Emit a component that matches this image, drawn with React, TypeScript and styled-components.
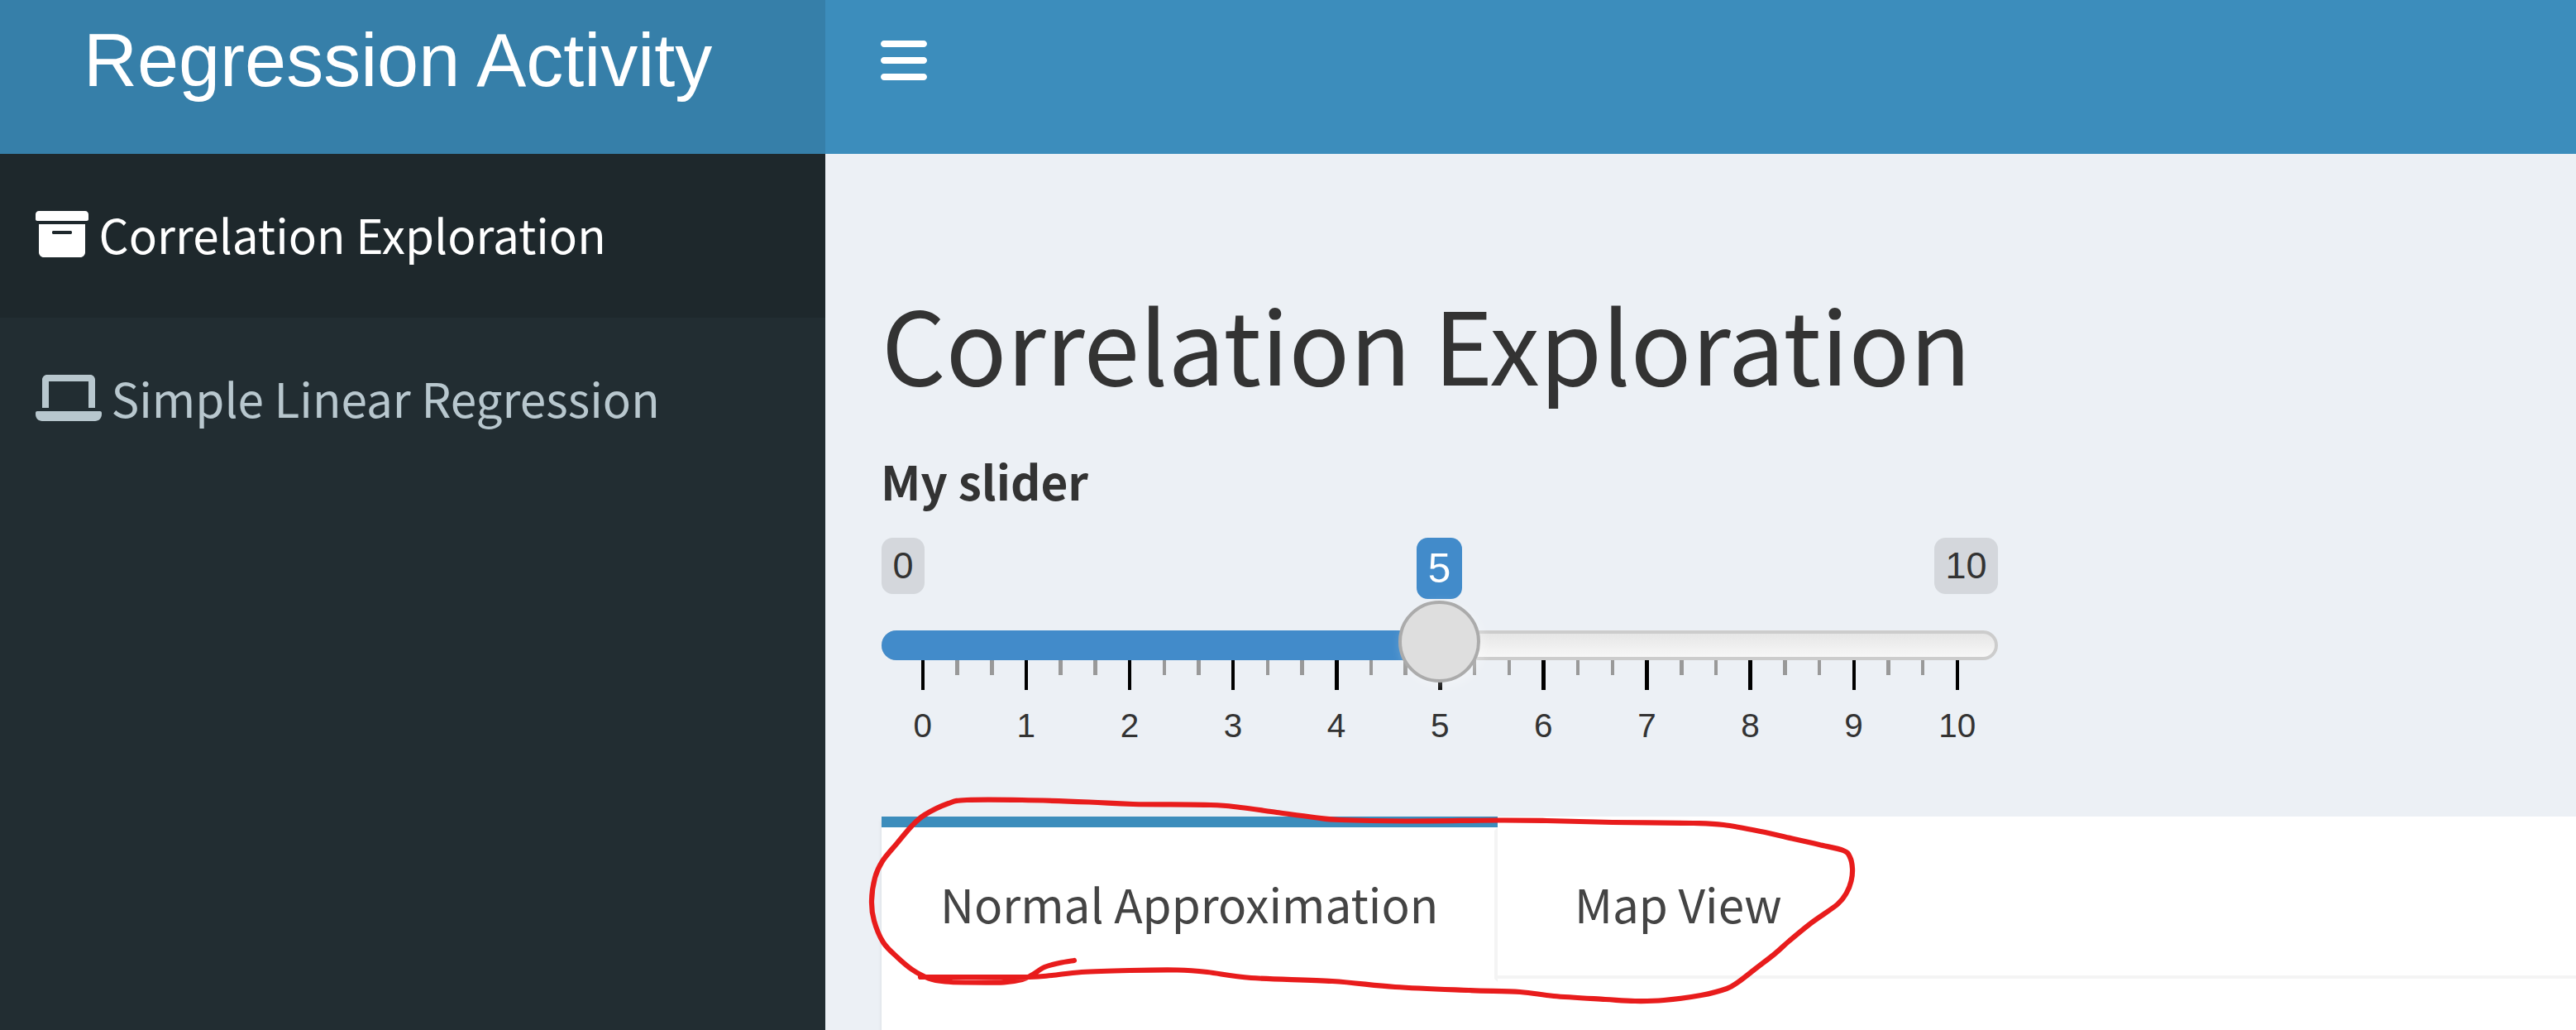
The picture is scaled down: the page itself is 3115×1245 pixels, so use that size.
import React from "react";
import styled, { createGlobalStyle, css } from "styled-components";

const GlobalStyle = createGlobalStyle`
  *, *::before, *::after { box-sizing: border-box; }
  html, body { margin: 0; padding: 0; overflow: hidden; background: #ecf0f5; }
`;

const SANS = `"Noto Sans CJK SC", "Noto Sans", sans-serif`;
const ARIAL = `"Liberation Sans", Arial, sans-serif`;

const Page = styled.div`
  position: relative;
  width: 3115px;
  height: 1245px;
  overflow: hidden;
  display: grid;
  grid-template-columns: 998px 1fr;
  grid-template-rows: 186px 1fr;
  font-family: ${SANS};
  color: #333;
  background: #ecf0f5;
`;

const Logo = styled.div`
  background: #367fa9;
  color: #fff;
  font-family: ${ARIAL};
  font-size: 90px;
  line-height: 100px;
  padding: 23px 0 0 101px;
  white-space: nowrap;
`;

const Navbar = styled.div`
  background: #3c8dbc;
  color: #fff;
  padding: 41px 0 0 67px;
`;

const Icon = styled.svg<{ $w: number; $h: number }>`
  display: block;
  flex: none;
  width: ${(p) => p.$w}px;
  height: ${(p) => p.$h}px;
  fill: currentColor;
`;

const Sidebar = styled.nav`
  background: #222d32;
`;

const MenuItem = styled.a<{ $active?: boolean }>`
  display: flex;
  align-items: flex-start;
  height: 198px;
  padding: 65px 0 0 43px;
  color: ${(p) => (p.$active ? "#fff" : "#b8c7ce")};
  background: ${(p) => (p.$active ? "#1e282c" : "transparent")};
`;

const MenuText = styled.span<{ $gap: number }>`
  margin: -9px 0 0 ${(p) => p.$gap}px;
  font-size: 56.65px;
  line-height: 80px;
  white-space: nowrap;
`;

const Content = styled.main`
  display: flex;
  flex-direction: column;
  padding: 152px 0 0 68px;
  min-width: 0;
`;

const Title = styled.h2`
  margin: 0;
  font-weight: 400;
  font-size: 121.7px;
  line-height: 150px;
  height: 194px;
  white-space: nowrap;
`;

const SliderLabel = styled.label`
  font-weight: 700;
  font-size: 56.7px;
  line-height: 80px;
  height: 118px;
  padding-top: 8px;
  margin-left: -1px;
  white-space: nowrap;
`;

const Slider = styled.div`
  width: 1350px;
  height: 337px;
  font-family: ${ARIAL};
`;

const Values = styled.div`
  display: flex;
  justify-content: space-between;
  align-items: flex-start;
  height: 112px;
`;

const Value = styled.span<{ $current?: boolean }>`
  border-radius: 13.5px;
  text-align: center;
  white-space: nowrap;
  ${(p) =>
    p.$current
      ? css`
          padding: 0 13.5px;
          height: 74px;
          margin-left: 24px;
          font-size: 49.5px;
          line-height: 74px;
          color: #fff;
          background: #428bca;
        `
      : css`
          padding: 0 13.5px;
          height: 68px;
          font-size: 45px;
          line-height: 67px;
          color: #333;
          background: rgba(0, 0, 0, 0.1);
        `}
`;

const Track = styled.div`
  position: relative;
  height: 36px;
  border: 4px solid #ccc;
  border-radius: 18px;
  background: linear-gradient(to bottom, #dedede -50%, #fff 150%);
`;

const Bar = styled.div`
  position: absolute;
  left: -4px;
  top: -4px;
  width: 675px;
  height: 36px;
  border-radius: 18px 0 0 18px;
  background: #428bca;
`;

const Handle = styled.div`
  position: absolute;
  left: 621px;
  top: -40px;
  z-index: 2;
  width: 99px;
  height: 99px;
  border: 4px solid #ababab;
  border-radius: 50%;
  background: #dedede;
  box-shadow: 4.5px 4.5px 13.5px rgba(255, 255, 255, 0.3);
`;

const Ticks = styled.div`
  display: flex;
  justify-content: space-between;
  height: 36px;
  margin: 0 46.5px 0 47.6px;
`;

const Tick = styled.i<{ $major: boolean }>`
  width: 4.5px;
  height: ${(p) => (p.$major ? 36 : 18)}px;
  background: ${(p) => (p.$major ? "#000" : "#999")};
`;

const TickLabels = styled.div`
  display: grid;
  grid-template-columns: repeat(11, 125.1px);
  margin: 20px 0 0 -12.8px;
  font-size: 40.5px;
  line-height: 46px;
  text-align: center;
`;

const TabPanel = styled.section`
  flex: 1;
  margin-right: -20px;
  background: #fff;
  box-shadow: 0 4.5px 4.5px rgba(0, 0, 0, 0.1);
`;

const TabRow = styled.div`
  display: flex;
  height: 200px;
`;

const Tab = styled.div<{ $active?: boolean }>`
  width: ${(p) => (p.$active ? 745 : 426)}px;
  height: 200px;
  border-top: 13px solid ${(p) => (p.$active ? "#3c8dbc" : "transparent")};
`;

const TabLink = styled.a<{ $active?: boolean }>`
  display: block;
  height: 187px;
  border: solid transparent;
  border-width: 4px 4px 4px 0;
  border-right-color: ${(p) => (p.$active ? "#f4f4f4" : "transparent")};
  padding: 47px 0 0 ${(p) => (p.$active ? 71 : 93)}px;
  color: #444;
  font-size: 56.6px;
  line-height: 80px;
  white-space: nowrap;
`;

const TabRule = styled.div`
  flex: 1;
  display: flex;
  height: 196px;
  border-bottom: 4px solid #f4f4f4;
`;

const Ink = styled.svg`
  position: absolute;
  left: 0;
  top: 0;
  width: 3115px;
  height: 1245px;
  pointer-events: none;
  fill: none;
  stroke: #e81c1c;
  stroke-width: 6.2;
  stroke-linecap: round;
  stroke-linejoin: round;
`;

const ARCHIVE =
  "M32 432C32 458.5 53.49 480 80 480h352c26.51 0 48-21.49 48-48V160H32V432zM160 236C160 229.4 165.4 224 172 224h168C346.6 224 352 229.4 352 236v8C352 250.6 346.6 256 340 256h-168C165.4 256 160 250.6 160 244V236zM480 32H32C14.31 32 0 46.31 0 64v48C0 120.8 7.188 128 16 128h480C504.8 128 512 120.8 512 112V64C512 46.31 497.7 32 480 32z";
const LAPTOP =
  "M128 96h384v256h64V80C576 53.63 554.4 32 528 32h-416C85.63 32 64 53.63 64 80V352h64V96zM624 384h-608C7.25 384 0 391.3 0 400V416c0 35.25 28.75 64 64 64h512c35.25 0 64-28.75 64-64v-16C640 391.3 632.8 384 624 384z";
const BARS =
  "M0 96C0 78.33 14.33 64 32 64H416C433.7 64 448 78.33 448 96C448 113.7 433.7 128 416 128H32C14.33 128 0 113.7 0 96zM0 256C0 238.3 14.33 224 32 224H416C433.7 224 448 238.3 448 256C448 273.7 433.7 288 416 288H32C14.33 288 0 273.7 0 256zM416 448H32C14.33 448 0 433.7 0 416C0 398.3 14.33 384 32 384H416C433.7 384 448 398.3 448 416C448 433.7 433.7 448 416 448z";

const STROKE: [number, number][] = [
  [1113, 1181], [1180, 1181], [1245, 1181], [1272, 1179], [1308, 1175], [1366, 1173],
  [1424, 1172.5], [1460, 1175], [1513, 1182], [1611, 1186], [1687, 1193], [1776, 1197],
  [1838, 1199], [1879, 1204], [1941, 1208], [1977, 1210], [2012, 1209], [2057, 1203],
  [2088, 1195], [2102, 1187], [2124, 1170], [2146, 1153], [2164, 1137], [2191, 1115],
  [2222, 1093], [2233, 1079], [2238.5, 1065], [2240, 1050], [2237, 1036], [2229, 1028],
  [2200, 1021], [2169, 1014], [2129, 1005], [2084, 997], [2048, 995], [1950, 994],
  [1870, 992], [1812, 991.5], [1700, 992.5], [1620, 991], [1589, 988], [1544, 982],
  [1500, 976], [1464, 973], [1370, 972], [1317, 969.5], [1236, 967], [1169, 967],
  [1147, 971], [1118, 985], [1102, 999], [1085, 1019], [1067, 1041], [1058, 1061],
  [1054, 1089], [1057, 1113], [1068, 1139], [1085, 1157], [1103, 1172], [1123, 1182.5],
  [1143, 1186.5], [1169, 1187.5], [1214, 1187.3], [1236, 1184], [1248, 1178.5], [1263, 1169],
  [1281, 1164], [1299, 1161],
];

/** Smooth curve through all points (Catmull-Rom converted to cubic Béziers). */
function smoothPath(pts: [number, number][]): string {
  let d = `M${pts[0][0]} ${pts[0][1]}`;
  for (let i = 0; i < pts.length - 1; i++) {
    const a = pts[Math.max(i - 1, 0)];
    const b = pts[i];
    const c = pts[i + 1];
    const e = pts[Math.min(i + 2, pts.length - 1)];
    d += `C${b[0] + (c[0] - a[0]) / 6} ${b[1] + (c[1] - a[1]) / 6} ${c[0] - (e[0] - b[0]) / 6} ${
      c[1] - (e[1] - b[1]) / 6
    } ${c[0]} ${c[1]}`;
  }
  return d;
}

export default function App() {
  return (
    <>
      <GlobalStyle />
      <Page>
        <Logo>Regression Activity</Logo>
        <Navbar>
          <Icon $w={56} $h={64} viewBox="0 0 448 512">
            <path d={BARS} />
          </Icon>
        </Navbar>
        <Sidebar>
          <MenuItem $active>
            <Icon $w={64} $h={64} viewBox="0 0 512 512">
              <path d={ARCHIVE} />
            </Icon>
            <MenuText $gap={12.5}>Correlation Exploration</MenuText>
          </MenuItem>
          <MenuItem>
            <Icon $w={80} $h={64} viewBox="0 0 640 512">
              <path d={LAPTOP} />
            </Icon>
            <MenuText $gap={11.5}>Simple Linear Regression</MenuText>
          </MenuItem>
        </Sidebar>
        <Content>
          <Title>Correlation Exploration</Title>
          <SliderLabel>My slider</SliderLabel>
          <Slider>
            <Values>
              <Value>0</Value>
              <Value $current>5</Value>
              <Value>10</Value>
            </Values>
            <Track>
              <Bar />
              <Handle />
            </Track>
            <Ticks>
              {Array.from({ length: 31 }, (_, i) => (
                <Tick key={i} $major={i % 3 === 0} />
              ))}
            </Ticks>
            <TickLabels>
              {Array.from({ length: 11 }, (_, i) => (
                <span key={i}>{i}</span>
              ))}
            </TickLabels>
          </Slider>
          <TabPanel>
            <TabRow>
              <Tab $active>
                <TabLink $active>Normal Approximation</TabLink>
              </Tab>
              <TabRule>
                <Tab>
                  <TabLink>Map View</TabLink>
                </Tab>
              </TabRule>
            </TabRow>
          </TabPanel>
        </Content>
        <Ink viewBox="0 0 3115 1245">
          <path d={smoothPath(STROKE)} />
        </Ink>
      </Page>
    </>
  );
}
